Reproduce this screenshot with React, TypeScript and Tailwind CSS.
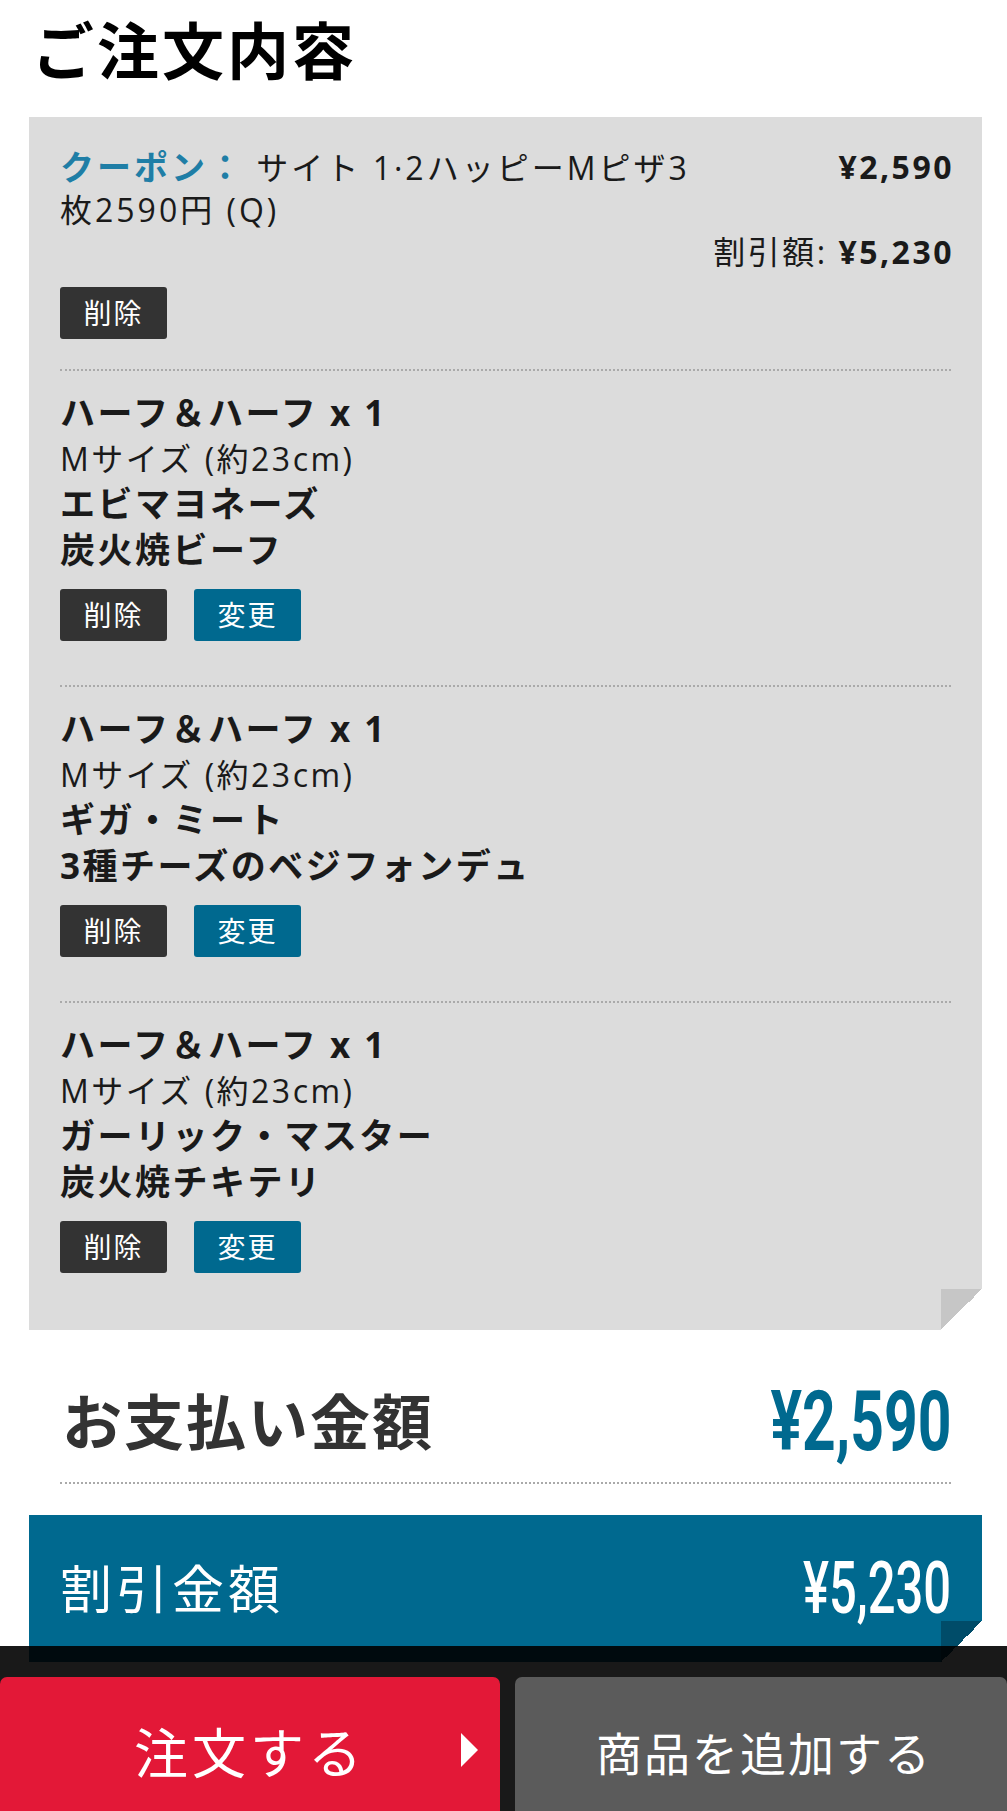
const items = [
  { a: "エビマヨネーズ", b: "炭火焼ビーフ" },
  { a: "ギガ・ミート", b: "3種チーズのベジフォンデュ" },
  { a: "ガーリック・マスター", b: "炭火焼チキテリ" },
];

function Btn({ label, blue }: { label: string; blue?: boolean }) {
  return (
    <div
      className={
        "flex h-[52px] w-[107px] items-center justify-center rounded-[3px] text-[28px] tracking-[2px] text-white " +
        (blue ? "bg-[#00698f]" : "bg-[#333333]")
      }
    >
      {label}
    </div>
  );
}

function Fold({ color }: { color: string }) {
  return (
    <div
      className={
        "absolute bottom-0 right-0 h-[41px] w-[41px] " +
        (color === "gray"
          ? "bg-[linear-gradient(to_bottom_right,#c6c6c6_50%,#ffffff_50%)]"
          : "bg-[linear-gradient(to_bottom_right,#004c69_50%,#ffffff_50%)]")
      }
    />
  );
}

export default function App() {
  return (
    <div className="min-h-[1811px] bg-white pb-[220px] font-['Open_Sans','Noto_Sans_CJK_JP',sans-serif] text-[#1a1a1a]">
      <h1 className="pl-[32px] text-[62px] font-bold leading-[102px] tracking-[3px] text-black">ご注文内容</h1>

      <div className="relative ml-[29px] mt-[15px] w-[953px] bg-[#dcdcdc] px-[31px] pb-[57px] pt-[29px] text-[32px] tracking-[2.5px]">
        <div className="flex justify-between leading-[42px]">
          <div className="w-[655px] tracking-[3px]">
            <span className="text-[34px] font-bold leading-[42px] text-[#1f7ea6]">クーポン：</span> サイト 1·2ハッピーMピザ3枚2590円 (Q)
          </div>
          <div className="-mr-[3px] font-bold">¥2,590</div>
        </div>
        <div className="-mr-[3px] text-right leading-[42px]">
          割引額: <span className="font-bold">¥5,230</span>
        </div>
        <div className="mt-[14px]">
          <Btn label="削除" />
        </div>
        <div className="mt-[30px] border-t-2 border-dotted border-[#aaaaaa]" />

        {items.map((it, i) => (
          <div key={i}>
            <div className="pt-[19px] leading-[45.5px]">
              <div className="text-[35px] font-bold tracking-[2.5px]">ハーフ＆ハーフ x 1</div>
              <div>Mサイズ (約23cm)</div>
              <div className="text-[35px] font-bold tracking-[2.5px]">{it.a}</div>
              <div className="text-[35px] font-bold tracking-[2.5px]">{it.b}</div>
            </div>
            <div className="mt-[17px] flex gap-[27px]">
              <Btn label="削除" />
              <Btn label="変更" blue />
            </div>
            {i < items.length - 1 && (
              <div className="mt-[44px] border-t-2 border-dotted border-[#aaaaaa]" />
            )}
          </div>
        ))}
        <Fold color="gray" />
      </div>

      <div className="ml-[29px] mt-[52px] w-[953px] px-[31px]">
        <div className="flex h-[80px] items-center justify-between">
          <div className="pl-[2px] text-[60px] font-bold tracking-[2px] text-[#333333]">お支払い金額</div>
          <div className="origin-right scale-x-[0.7] font-['Roboto'] text-[84px] font-bold leading-none text-[#00698f]">¥2,590</div>
        </div>
        <div className="mt-[20px] border-t-2 border-dotted border-[#aaaaaa]" />
      </div>

      <div className="relative ml-[29px] mt-[31px] flex h-[147px] w-[953px] items-center justify-between bg-[#00698f] px-[31px] text-white">
        <div className="text-[52px] tracking-[4px]">割引金額</div>
        <div className="origin-right scale-x-[0.67] font-['Roboto'] text-[73px] font-medium leading-none">¥5,230</div>
        <Fold color="blue" />
      </div>

      <div className="fixed inset-x-0 bottom-0 h-[165px] overflow-hidden bg-black/90 pt-[31px]">
        <div className="flex gap-[15px]">
          <div className="relative flex h-[152px] w-[500px] items-center justify-center rounded-t-[7px] bg-[#e31837] text-[54px] tracking-[4px] text-white">
            注文する
            <div className="absolute right-[22px] top-[56px] h-0 w-0 border-y-[17px] border-l-[17px] border-y-transparent border-l-white" />
          </div>
          <div className="flex h-[152px] flex-1 items-center justify-center rounded-t-[7px] bg-[#5b5b5b] pl-[6px] text-[46px] tracking-[2px] text-white">
            商品を追加する
          </div>
        </div>
      </div>
    </div>
  );
}
